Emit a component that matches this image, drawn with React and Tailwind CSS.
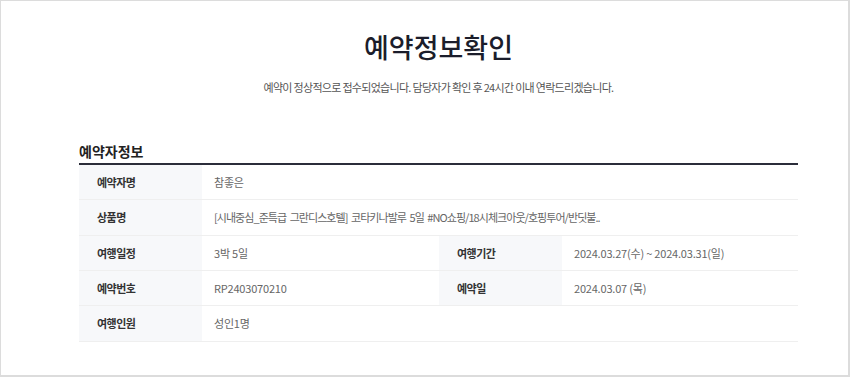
import React from "react";

const font = { fontFamily: '"Noto Sans CJK KR", "Noto Sans", sans-serif' };

function Label({ children }) {
  return (
    <div className="flex items-center bg-[#f7f8fa] pl-[18px] text-[11px] font-bold tracking-[-0.5px] text-[#333] border-b border-[#efefef]">
      {children}
    </div>
  );
}

function Value({ children, span, tight }) {
  return (
    <div
      className={`flex items-center pl-[12px] text-[11px] text-[#666] border-b border-[#efefef] ${span ? "col-span-3" : ""} ${tight ? "tracking-[-0.95px] [word-spacing:2px]" : "tracking-[-0.2px]"}`}
    >
      {children}
    </div>
  );
}

export default function App() {
  return (
    <div
      style={font}
      className="w-[850px] h-[377px] bg-white border-t border-l border-r-2 border-b-2 border-[#dcdcdc] overflow-hidden"
    >
      <div className="ml-[78px] w-[719px]">
        <h1 className="pt-[30px] text-center text-[27px] leading-[32px] font-medium text-[#1b1d2b]">
          예약정보확인
        </h1>
        <p className="mt-[15px] text-center text-[11px] leading-[18px] tracking-[-0.7px] text-[#555]">
          예약이 정상적으로 접수되었습니다. 담당자가 확인 후 24시간 이내 연락드리겠습니다.
        </p>
        <h2 className="mt-[45px] text-[14px] leading-[20px] font-bold text-[#222] pb-[2px]">예약자정보</h2>
        <div className="grid grid-cols-[123px_237px_123px_1fr] grid-rows-[35px_36px_35px_35px_36px] border-t-2 border-[#2b2d3a]">
          <Label>예약자명</Label>
          <Value span>참좋은</Value>
          <Label>상품명</Label>
          <Value span tight>[시내중심_준특급 그란디스호텔] 코타키나발루 5일 #NO쇼핑/18시체크아웃/호핑투어/반딧불..</Value>
          <Label>여행일정</Label>
          <Value>3박 5일</Value>
          <Label>여행기간</Label>
          <Value>2024.03.27(수) ~ 2024.03.31(일)</Value>
          <Label>예약번호</Label>
          <Value>RP2403070210</Value>
          <Label>예약일</Label>
          <Value>2024.03.07 (목)</Value>
          <Label>여행인원</Label>
          <Value span>성인1명</Value>
        </div>
      </div>
    </div>
  );
}
